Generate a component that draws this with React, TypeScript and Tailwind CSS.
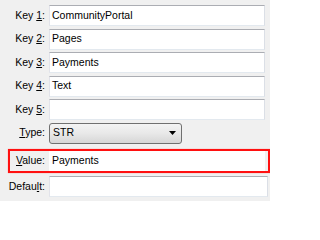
import type { ReactNode } from "react";

const font = { fontFamily: '"Liberation Sans", Arial, sans-serif' };

function Label({ children, className = "w-[46px]" }: { children: ReactNode; className?: string }) {
	return <span className={`${className} shrink-0 pr-[1px] text-right`}>{children}</span>;
}

function Field({ value, className = "w-[216px]" }: { value?: string; className?: string }) {
	return (
		<div
			className={`${className} flex h-[21px] items-center border border-t-[#abadb3] border-r-[#dbdfe6] border-b-[#e3e9ef] border-l-[#e2e3ea] bg-white pl-[2px]`}
		>
			{value}
		</div>
	);
}

function KeyRow({ n, value }: { n: number; value?: string }) {
	return (
		<div className="flex items-center">
			<Label>
				Key <u>{n}</u>:
			</Label>
			<div className="ml-[3px]">
				<Field value={value} />
			</div>
		</div>
	);
}

export default function App() {
	return (
		<div className="h-[201px] w-[270px] overflow-hidden bg-[#f0f0f0] text-[10.5px] text-black" style={font}>
			<div className="flex flex-col gap-[2.5px] pt-[5px]">
				<KeyRow n={1} value="CommunityPortal" />
				<KeyRow n={2} value="Pages" />
				<KeyRow n={3} value="Payments" />
				<KeyRow n={4} value="Text" />
				<KeyRow n={5} />

				{/* Type dropdown */}
				<div className="flex items-center">
					<Label>
						<u>T</u>ype:
					</Label>
					<div className="ml-[3px] flex h-[21px] w-[133px] items-center justify-between rounded-[3px] border border-[#707070] bg-linear-to-b from-[#f4f4f4] via-[#e8e8e8] to-[#d6d6d6] pr-[5px] pl-[3px]">
						<span>STR</span>
						<svg width="7" height="4" viewBox="0 0 7 4">
							<path d="M0 0h7L3.5 4z" fill="#000" />
						</svg>
					</div>
				</div>
			</div>

			{/* Highlighted value */}
			<div className="mt-[5.5px] ml-[8px] flex h-[24px] w-[262px] items-center border-2 border-[#ff1010] shadow-[0_0_1px_#ff8080]">
				<Label className="w-[36px]">
					<u>V</u>alue:
				</Label>
				<div className="ml-[3px]">
					<div className="flex h-[20px] w-[216px] items-center bg-white pl-[3px]">Payments</div>
				</div>
			</div>

			<div className="mt-[3px] flex items-center">
				<Label>
					Defau<u>l</u>t:
				</Label>
				<div className="ml-[3px]">
					<Field className="w-[219px]" />
				</div>
			</div>
		</div>
	);
}
